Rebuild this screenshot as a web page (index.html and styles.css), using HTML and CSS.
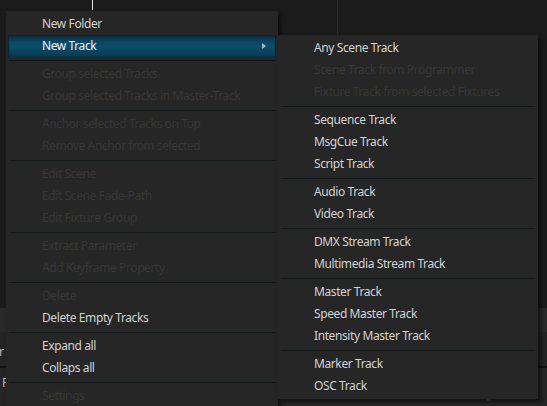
FILE: index.html
```html
<!DOCTYPE html>
<html>
<head>
<meta charset="utf-8">
<link rel="stylesheet" href="styles.css">
</head>
<body>
<div class="app">
  <div class="row r-top"><span class="cursor-line"></span><span class="vline"></span></div>
  <div class="row r-band"></div>
  <div class="row r-mid"><span class="edge-text">r</span></div>
  <div class="row r-rule"></div>
  <div class="row r-bot"><span class="edge-text f">F</span><span class="bot-text">ll</span></div>
</div>

<div class="menu main-menu">
  <div class="item">New Folder</div>
  <div class="item active">New Track<span class="arrow"></span></div>
  <div class="sep"></div>
  <div class="item disabled">Group selected Tracks</div>
  <div class="item disabled">Group selected Tracks in Master-Track</div>
  <div class="sep"></div>
  <div class="item disabled">Anchor selected Tracks on Top</div>
  <div class="item disabled">Remove Anchor from selected</div>
  <div class="sep"></div>
  <div class="item disabled">Edit Scene</div>
  <div class="item disabled">Edit Scene Fade-Path</div>
  <div class="item disabled">Edit Fixture Group</div>
  <div class="sep"></div>
  <div class="item disabled">Extract Parameter</div>
  <div class="item disabled">Add Keyframe Property</div>
  <div class="sep"></div>
  <div class="item disabled">Delete</div>
  <div class="item">Delete Empty Tracks</div>
  <div class="sep"></div>
  <div class="item">Expand all</div>
  <div class="item">Collaps all</div>
  <div class="sep"></div>
  <div class="item disabled">Settings</div>
</div>

<div class="menu sub-menu">
  <div class="item">Any Scene Track</div>
  <div class="item disabled">Scene Track from Programmer</div>
  <div class="item disabled">Fixture Track from selected Fixtures</div>
  <div class="sep"></div>
  <div class="item">Sequence Track</div>
  <div class="item">MsgCue Track</div>
  <div class="item">Script Track</div>
  <div class="sep"></div>
  <div class="item">Audio Track</div>
  <div class="item">Video Track</div>
  <div class="sep"></div>
  <div class="item">DMX Stream Track</div>
  <div class="item">Multimedia Stream Track</div>
  <div class="sep"></div>
  <div class="item">Master Track</div>
  <div class="item">Speed Master Track</div>
  <div class="item">Intensity Master Track</div>
  <div class="sep"></div>
  <div class="item">Marker Track</div>
  <div class="item">OSC Track</div>
</div>
</body>
</html>
```

FILE: styles.css
```css
html, body {
  margin: 0;
  padding: 0;
  width: 547px;
  height: 406px;
  overflow: hidden;
  background: #1b1b1b;
  font-family: "Noto Sans", "Open Sans", sans-serif;
  font-size: 12px;
}

.app {
  display: grid;
  grid-template-rows: 308px 24px 34px 2px 38px;
  height: 406px;
}

.row {
  position: relative;
  display: flex;
  align-items: center;
}

.r-top { background: #1b1b1b; }
.r-band { background: #2a2a2a; }
.r-mid { background: #242424; }
.r-rule { background: #121212; }
.r-bot { background: #262626; align-items: flex-start; }

.cursor-line {
  position: absolute;
  left: 92px;
  top: 0;
  width: 1px;
  height: 10px;
  background: #e6e6e6;
}

.vline {
  position: absolute;
  left: 337px;
  top: 0;
  width: 1px;
  height: 36px;
  background: #2a2a2a;
}

.edge-text {
  color: #b8b8b8;
  font-size: 12px;
  margin-left: -1px;
  margin-top: 4px;
}

.edge-text.f {
  margin-left: 2px;
  margin-top: 6px;
}

.bot-text {
  color: #8a8a8a;
  margin-left: 478px;
  margin-top: 25px;
  font-size: 8px;
  line-height: 10px;
}

.menu {
  position: absolute;
  background: #262626;
  padding: 2px 0;
  box-shadow: 3px 3px 4px rgba(0, 0, 0, 0.55);
  letter-spacing: -0.4px;
}

.main-menu {
  left: 6px;
  top: 11px;
  width: 272px;
  height: 391px;
}

.sub-menu {
  left: 278px;
  top: 35px;
  width: 260px;
}

.item {
  position: relative;
  height: 22px;
  line-height: 22px;
  color: #d2d2d2;
  white-space: nowrap;
}

.main-menu .item {
  margin: 0 2px;
  padding-left: 34px;
}

.sub-menu .item {
  padding-left: 36px;
}

.item.disabled {
  color: #373737;
}

.item.active {
  color: #eef3f6;
  background: linear-gradient(#06293a, #0a4663 30%, #0b4d6c 55%, #08384f 100%);
  box-shadow: inset 1px 0 1px #062433, inset -1px 0 1px #062433;
}

.arrow {
  position: absolute;
  right: 10px;
  top: 8px;
  width: 0;
  height: 0;
  border-left: 4px solid #a9b8c0;
  border-top: 3.5px solid transparent;
  border-bottom: 3.5px solid transparent;
}

.sep {
  height: 1px;
  background: #131818;
  margin: 3px 2px 2px 3px;
}

.sub-menu .sep {
  margin: 3px 3px 2px 3px;
}
```
